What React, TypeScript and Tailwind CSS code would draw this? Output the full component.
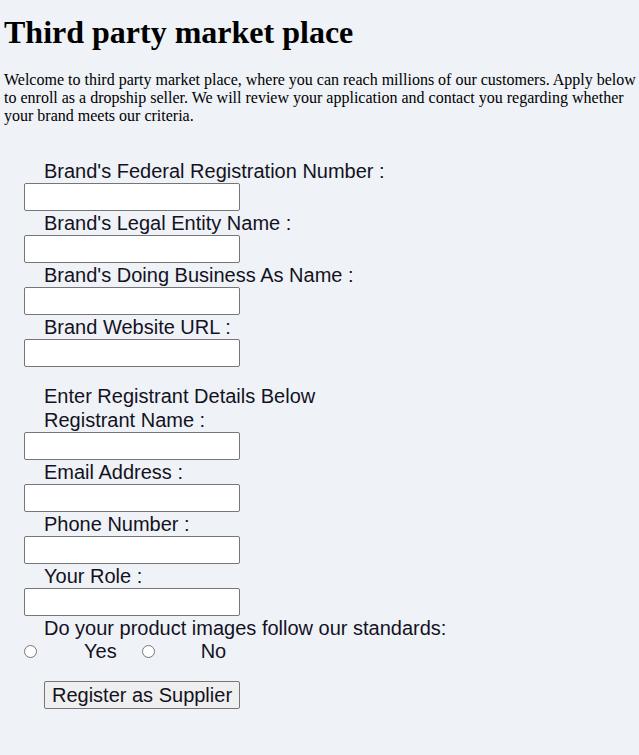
import React from "react";

const fields1 = [
  "Brand's Federal Registration Number :",
  "Brand's Legal Entity Name :",
  "Brand's Doing Business As Name :",
  "Brand Website URL :",
];
const fields2 = ["Registrant Name :", "Email Address :", "Phone Number :", "Your Role :"];

function Field({ label }: { label: string }) {
  return (
    <div className="flex flex-col">
      <label className="ml-[40px] h-[24px] leading-[24px] text-[20px] text-[#14121f]">{label}</label>
      <input
        type="text"
        className="ml-[20px] h-[28px] w-[216px] rounded-[2px] border border-[#767676] bg-white"
      />
    </div>
  );
}

export default function App() {
  return (
    <div className="min-h-[755px] w-full bg-[#eff2f7] pl-[4px]">
      <h1
        className="pt-[14px] text-[32px] font-bold leading-[37px] text-black"
        style={{ fontFamily: '"Liberation Serif", serif' }}
      >
        Third party market place
      </h1>
      <p
        className="mt-[20px] text-[16px] leading-[18px] text-black"
        style={{ fontFamily: '"Liberation Serif", serif' }}
      >
        Welcome to third party market place, where you can reach millions of our customers. Apply below to
        enroll as a dropship seller. We will review your application and contact you regarding whether your
        brand meets our criteria.
      </p>
      <form
        className="mt-[34px] flex flex-col"
        style={{ fontFamily: '"Liberation Sans", Arial, sans-serif' }}
        onSubmit={(e) => e.preventDefault()}
      >
        {fields1.map((f) => (
          <Field key={f} label={f} />
        ))}
        <div className="ml-[40px] mt-[18px] h-[23px] leading-[23px] text-[20px] text-[#14121f]">
          Enter Registrant Details Below
        </div>
        {fields2.map((f) => (
          <Field key={f} label={f} />
        ))}
        <div className="ml-[40px] h-[24px] leading-[24px] text-[20px] text-[#14121f]">
          Do your product images follow our standards:
        </div>
        <div className="flex h-[23px] items-center text-[20px] leading-[23px] text-[#14121f]">
          <span className="ml-[20px] h-[13px] w-[13px] rounded-full border border-[#767676] bg-white" />
          <span className="ml-[47px]">Yes</span>
          <span className="ml-[25px] h-[13px] w-[13px] rounded-full border border-[#767676] bg-white" />
          <span className="ml-[46px]">No</span>
        </div>
        <div className="mt-[18px]">
          <button
            type="submit"
            className="ml-[40px] h-[28px] w-[196px] rounded-[2px] border border-[#767676] bg-[#efefef] text-[20px] leading-[24px] text-[#14121f]"
          >
            Register as Supplier
          </button>
        </div>
      </form>
    </div>
  );
}
